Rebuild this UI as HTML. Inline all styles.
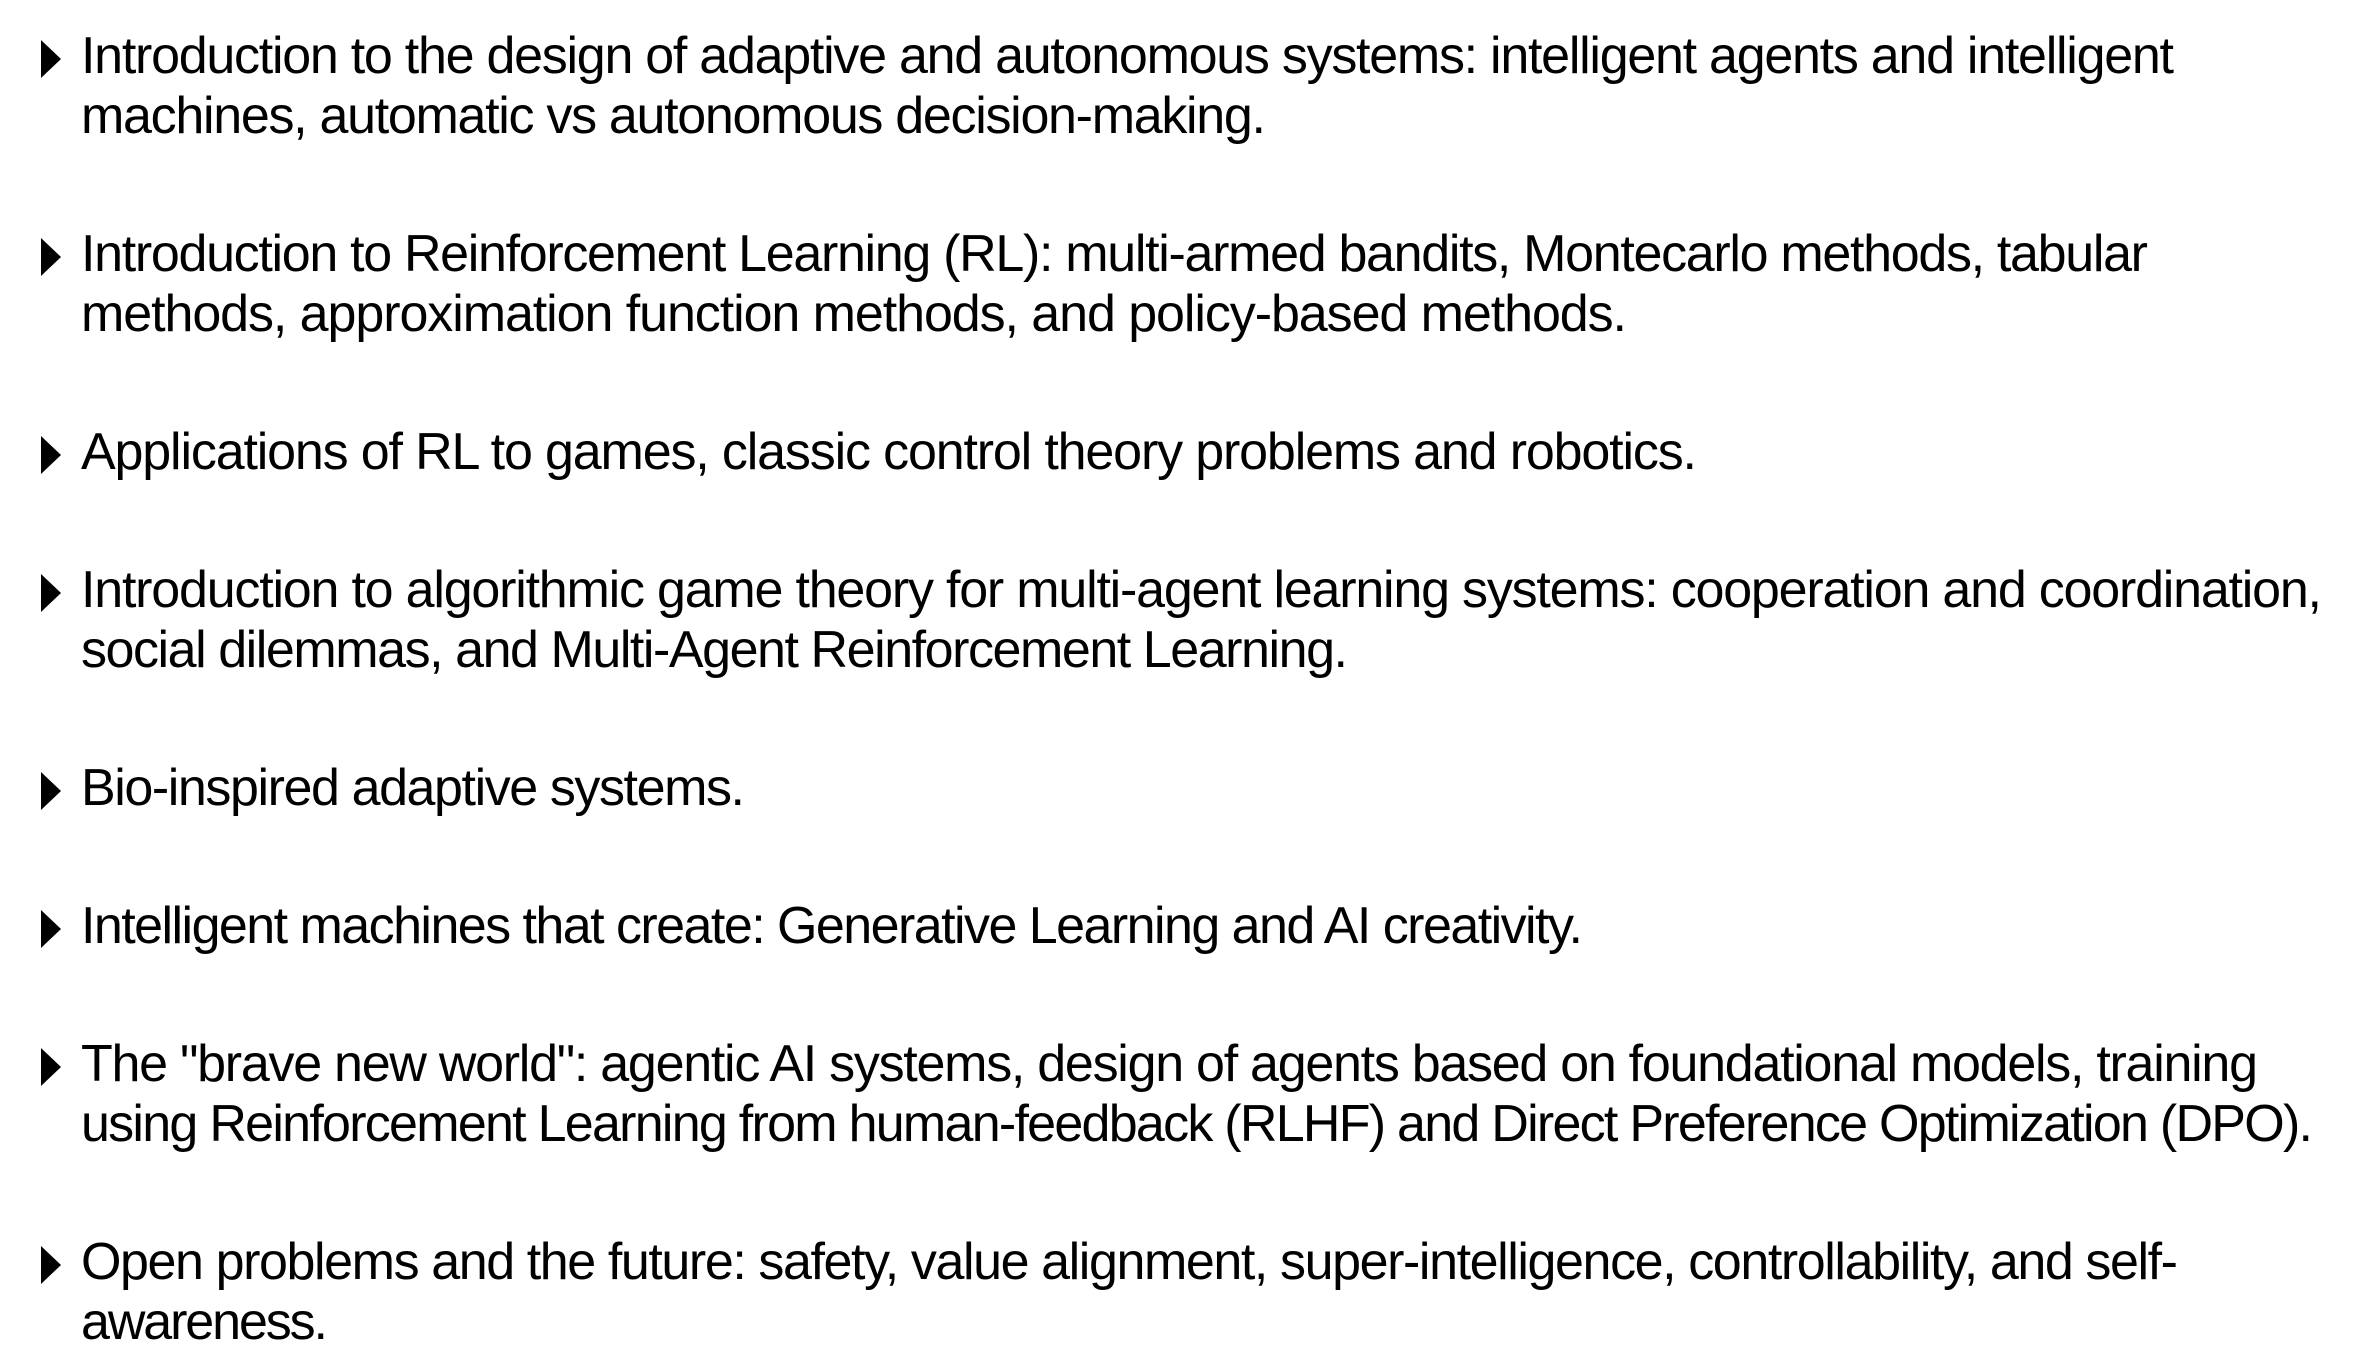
<!DOCTYPE html>
<html><head><meta charset="utf-8"><style>
html,body{margin:0;padding:0;background:#fff;}
body{width:2354px;height:1360px;overflow:hidden;}
text{font-family:"Liberation Sans",Arial,sans-serif;font-size:52px;fill:#000;}
</style></head><body>
<svg width="2354" height="1360" xmlns="http://www.w3.org/2000/svg">
<g fill="#000">
<polygon points="41,40 61,59 41,78"/>
<polygon points="41,238 61,257 41,276"/>
<polygon points="41,436 61,455 41,474"/>
<polygon points="41,574 61,593 41,612"/>
<polygon points="41,772 61,791 41,810"/>
<polygon points="41,910 61,929 41,948"/>
<polygon points="41,1048 61,1067 41,1086"/>
<polygon points="41,1246 61,1265 41,1284"/>
</g>
<text x="81" y="73" textLength="2093">Introduction to the design of adaptive and autonomous systems: intelligent agents and intelligent</text>
<text x="81" y="133" textLength="1185">machines, automatic vs autonomous decision-making.</text>
<text x="81" y="271" textLength="2067">Introduction to Reinforcement Learning (RL): multi-armed bandits, Montecarlo methods, tabular</text>
<text x="81" y="331" textLength="1546">methods, approximation function methods, and policy-based methods.</text>
<text x="81" y="469" textLength="1616">Applications of RL to games, classic control theory problems and robotics.</text>
<text x="81" y="607" textLength="2241">Introduction to algorithmic game theory for multi-agent learning systems: cooperation and coordination,</text>
<text x="81" y="667" textLength="1267">social dilemmas, and Multi-Agent Reinforcement Learning.</text>
<text x="81" y="805" textLength="664">Bio-inspired adaptive systems.</text>
<text x="81" y="943" textLength="1502">Intelligent machines that create: Generative Learning and AI creativity.</text>
<text x="81" y="1081" textLength="2177">The "brave new world": agentic AI systems, design of agents based on foundational models, training</text>
<text x="81" y="1141" textLength="2232">using Reinforcement Learning from human-feedback (RLHF) and Direct Preference Optimization (DPO).</text>
<text x="81" y="1279" textLength="2097">Open problems and the future: safety, value alignment, super-intelligence, controllability, and self-</text>
<text x="81" y="1339" textLength="247">awareness.</text>
</svg>
</body></html>
